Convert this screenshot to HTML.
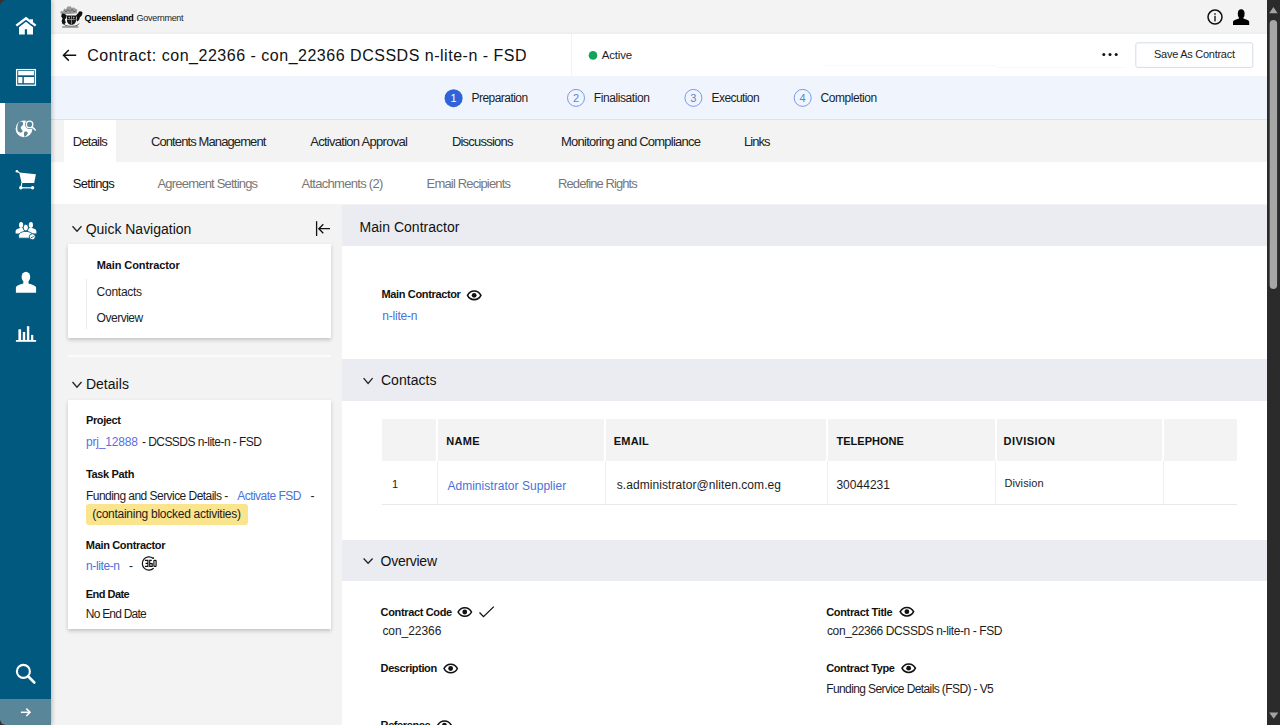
<!DOCTYPE html>
<html><head><meta charset="utf-8">
<style>
html,body{margin:0;padding:0;}
body{width:1280px;height:725px;overflow:hidden;position:relative;background:#f3f3f3;font-family:"Liberation Sans",sans-serif;}
.a{position:absolute;}
.t{position:absolute;white-space:nowrap;line-height:1;}
svg{position:absolute;overflow:visible;}
</style></head><body>
<!-- corners -->
<div class="a" style="left:0;top:0;width:10px;height:10px;background:#3b3330;"></div>
<div class="a" style="left:0;top:715px;width:10px;height:10px;background:#3b3330;"></div>

<!-- title bar -->
<div class="a" style="left:51px;top:34px;width:1216px;height:42px;background:#fff;box-shadow:0 -1px 2px rgba(0,0,0,.04);"></div>
<div class="a" style="left:571px;top:34px;width:1px;height:42px;background:#f3f3f3;"></div>
<div class="a" style="left:823px;top:65px;width:173px;height:1px;background:#f9f9f9;"></div><div class="a" style="left:996px;top:67px;width:130px;height:1px;background:#f9f9f9;"></div>
<!-- stepper -->
<div class="a" style="left:51px;top:76px;width:1216px;height:43px;background:#f0f5fd;border-bottom:1px solid #dfe2e8;"></div>
<!-- tabs -->
<div class="a" style="left:51px;top:120px;width:1216px;height:42.3px;background:#f3f3f3;"></div>
<div class="a" style="left:64px;top:120px;width:52.3px;height:42.3px;background:#fff;"></div>
<!-- subtabs -->
<div class="a" style="left:51px;top:162.3px;width:1216px;height:41.7px;background:#fff;"></div>

<!-- right content -->
<div class="a" style="left:342px;top:204px;width:925px;height:521px;background:#fff;"></div><div class="a" style="left:342px;top:204px;width:925px;height:1px;background:#f4f4f6;"></div>
<div class="a" style="left:342px;top:204.7px;width:925px;height:41.6px;background:#ebecf1;"></div>
<div class="a" style="left:342px;top:358.5px;width:925px;height:42px;background:#ebecf1;"></div>
<div class="a" style="left:342px;top:539.7px;width:925px;height:41px;background:#ebecf1;"></div>

<!-- table -->
<div class="a" style="left:381.5px;top:419px;width:855.5px;height:41.5px;background:#f3f3f3;"></div>
<div class="a" style="left:381.5px;top:504px;width:855.5px;height:1px;background:#e8e8e8;"></div>
<div class="a" style="left:436px;top:419px;width:2px;height:41.5px;background:#fff;"></div><div class="a" style="left:436.5px;top:460.5px;width:1px;height:43.5px;background:#eeeeee;"></div>
<div class="a" style="left:604px;top:419px;width:2px;height:41.5px;background:#fff;"></div><div class="a" style="left:604.5px;top:460.5px;width:1px;height:43.5px;background:#eeeeee;"></div>
<div class="a" style="left:826px;top:419px;width:2px;height:41.5px;background:#fff;"></div><div class="a" style="left:826.5px;top:460.5px;width:1px;height:43.5px;background:#eeeeee;"></div>
<div class="a" style="left:994.5px;top:419px;width:2px;height:41.5px;background:#fff;"></div><div class="a" style="left:995.0px;top:460.5px;width:1px;height:43.5px;background:#eeeeee;"></div>
<div class="a" style="left:1162px;top:419px;width:2px;height:41.5px;background:#fff;"></div><div class="a" style="left:1162.5px;top:460.5px;width:1px;height:43.5px;background:#eeeeee;"></div>

<!-- left cards -->
<div class="a" style="left:68px;top:244px;width:263.3px;height:94px;background:#fff;box-shadow:0 1.5px 4px rgba(0,0,0,.2);"></div>
<div class="a" style="left:86px;top:279px;width:1px;height:50px;background:#ececec;"></div>
<div class="a" style="left:68px;top:355px;width:263.3px;height:2px;background:#fbfbfb;"></div>
<div class="a" style="left:68px;top:399.7px;width:263.3px;height:229px;background:#fff;box-shadow:0 1.5px 4px rgba(0,0,0,.2);"></div>
<div class="a" style="left:85.6px;top:504.4px;width:162px;height:20.3px;background:#fbe48e;border-radius:3px;"></div>

<!-- sidebar -->
<div class="a" style="left:0;top:0;width:51px;height:725px;background:#02597f;border-radius:6px 0 0 6px;box-shadow:1px 0 4px rgba(0,0,0,.25);"></div>
<div class="a" style="left:0;top:103px;width:51px;height:51px;background:#5a8699;"></div>
<div class="a" style="left:0;top:103px;width:5px;height:51px;background:#fff;"></div>
<div class="a" style="left:0;top:699px;width:51px;height:26px;background:#5a8699;border-radius:0 0 0 6px;"></div>

<svg width="1280" height="725" style="left:0;top:0;">
 <!-- home -->
 <g fill="#fff">
  <path d="M16.3 25.6 L26 18.2 L35.6 25.6" fill="none" stroke="#fff" stroke-width="2.4" stroke-linejoin="miter"/>
  <rect x="30" y="19.3" width="3" height="4"/>
  <path d="M19 27.2 L26 21.8 L33 27.2 V34.4 H27.1 V29.2 H24.8 V34.4 H19 Z"/>
 </g>
 <!-- layout -->
 <g fill="#fff">
  <rect x="16.6" y="69.6" width="18.8" height="15.6" fill="none" stroke="#fff" stroke-width="1.3"/>
  <rect x="18.2" y="71" width="15.8" height="4.3"/>
  <rect x="18.2" y="77" width="4.2" height="6.2"/>
  <rect x="23.8" y="77" width="10.2" height="6.2"/>
 </g>
 <!-- globe -->
 <g>
  <circle cx="24" cy="128.8" r="8.4" fill="#fff"/>
  <path d="M19.5 121.8 C22 121 23.5 122 23 124.5 C22.5 126.5 20.5 126 20.8 128 C21 129.5 23 129.8 22.5 131.5 C22 133 19.5 133 18 131.5 C17 129 17 124 19.5 121.8Z" fill="#5a8699"/>
  <path d="M24.5 131.8 C26.5 131 28.5 132 27.5 134 C26.8 135.5 25 136.5 24.5 137.2 C24 135 23.5 133 24.5 131.8Z" fill="#5a8699"/>
  <circle cx="29.6" cy="124.4" r="4.6" fill="#5a8699"/>
  <circle cx="29.6" cy="124.4" r="3.2" fill="none" stroke="#fff" stroke-width="1.3"/>
  <line x1="32" y1="126.8" x2="35.3" y2="130" stroke="#fff" stroke-width="1.5" stroke-linecap="round"/>
 </g>
 <!-- cart -->
 <g fill="#fff" stroke="#fff">
  <circle cx="16.9" cy="171.2" r="1.3" stroke="none"/>
  <line x1="16.9" y1="171.2" x2="19.6" y2="172.8" stroke-width="1.2"/>
  <path d="M19.2 172.6 L35.9 174.3 L34.2 183.1 L21.6 183.1 Z" stroke="none"/>
  <line x1="21.8" y1="183" x2="21" y2="187.5" stroke-width="1.1"/>
  <circle cx="20.8" cy="187.8" r="1.7" stroke="none"/>
  <circle cx="32.6" cy="187.8" r="1.7" stroke="none"/>
  <line x1="20.8" y1="187.8" x2="32.6" y2="187.8" stroke-width="1.2"/>
 </g>
 <!-- people -->
 <g fill="#fff">
  <ellipse cx="21.1" cy="225" rx="2.1" ry="2.9"/>
  <path d="M15.6 233.4 V231 C15.6 229.3 18.5 228.4 20 228 H22.2 C23 228.3 23.6 228.7 24 229.2 V233.4 Z"/>
  <ellipse cx="30.9" cy="225" rx="2.1" ry="2.9"/>
  <path d="M36.4 233.4 V231 C36.4 229.3 33.5 228.4 32 228 H29.8 C29 228.3 28.4 228.7 28 229.2 V233.4 Z"/>
  <ellipse cx="25.8" cy="227.6" rx="2.6" ry="3.4" stroke="#02597f" stroke-width="0.9"/>
  <path d="M18.6 238.2 V235.2 C18.6 233 22 231.8 24.5 231.4 H27 C29.5 231.8 32.8 233 32.8 235.2 V238.2 Z" stroke="#02597f" stroke-width="0.9"/>
  <circle cx="32.3" cy="236.8" r="3" stroke="#02597f" stroke-width="0.9"/>
  <path d="M30.9 236.9 L31.9 237.8 L33.6 235.9" fill="none" stroke="#02597f" stroke-width="0.9"/>
 </g>
 <!-- person -->
 <g fill="#fff">
  <ellipse cx="25.9" cy="277" rx="4.3" ry="5.2"/>
  <path d="M15.9 292.7 V287.5 C15.9 285.8 20 284.6 23.2 283.5 L23.5 281 H28.3 L28.6 283.5 C31.8 284.6 36.1 285.8 36.1 287.5 V292.7 Z"/>
 </g>
 <!-- chart -->
 <g fill="#fff">
  <rect x="15.9" y="340" width="20.2" height="1.8"/>
  <rect x="18.4" y="329.3" width="2.7" height="11"/>
  <rect x="22.8" y="332" width="2.4" height="8.5"/>
  <rect x="26.9" y="326.2" width="2.4" height="14"/>
  <rect x="31" y="334.9" width="2.3" height="5.5"/>
 </g>
 <!-- search -->
 <circle cx="23.4" cy="671.4" r="6.5" fill="none" stroke="#fff" stroke-width="2.1"/>
 <line x1="28.3" y1="676.5" x2="34.3" y2="682.5" stroke="#fff" stroke-width="2.6" stroke-linecap="round"/>
 <!-- expand arrow -->
 <path d="M20.9 712.3 H30" fill="none" stroke="#fff" stroke-width="1.5"/>
 <path d="M26.3 708.6 L30 712.3 L26.3 716" fill="none" stroke="#fff" stroke-width="1.5"/>

 <!-- crest -->
 <g>
  <path d="M60.2 13 L61 10.8 L63 11.6 L64 8.5 L66 9.2 L67.5 6.6 L70.5 6.3 L72 8 L73.5 7.2 L75.5 8.8 L77.4 9.5 L76.8 13.2 L70 14 L62.5 14 Z" fill="#9a9a9a"/>
  <path d="M64.5 10.5 L66 12 L68 9.5 L70 11.5 L72 9.3 L74 12 L75.6 10.8" fill="none" stroke="#555" stroke-width="0.8"/>
  <path d="M61.8 13.5 L64.5 13.8 L66.8 15.5 L66.2 18 L64.8 19.5 L65.8 22.5 L64.2 24.5 L62.5 24 L61.6 21 L62.6 18.5 L61.2 16.5 Z" fill="#111"/>
  <path d="M76 15.5 L78.2 13 L79 11.6 L81 11.3 L82.6 12.6 L81.8 15.5 L80 17.2 L79.2 19.5 L77.6 21.5 L76.3 20.2 L76.8 18 Z" fill="#111"/>
  <path d="M67 15.5 H76 V20.5 C76 23.3 73.6 24.8 71.5 24.8 C69.4 24.8 67 23.3 67 20.5 Z" fill="#1a1a1a"/>
  <path d="M71.5 15.8 V24.2 M67.5 19.5 H75.5" stroke="#aaa" stroke-width="0.7"/>
  <circle cx="69.3" cy="17.6" r="0.8" fill="#bbb"/><circle cx="73.7" cy="17.6" r="0.8" fill="#bbb"/>
  <path d="M63.5 23.8 C65.5 26 68 26.3 71.5 26.3 C75 26.3 77.5 26 79 23.5" fill="none" stroke="#444" stroke-width="0.9"/>
  <rect x="62.2" y="26.2" width="16.2" height="1.5" fill="#8a8a8a"/>
 </g>
 <!-- back arrow -->
 <path d="M63.5 55.3 H76.2 M68.8 50 L63.5 55.3 L68.8 60.6" fill="none" stroke="#111" stroke-width="1.5"/>
 <!-- green dot -->
 <circle cx="593" cy="55.4" r="4.3" fill="#12a55a"/>
 <!-- dots -->
 <circle cx="1103.8" cy="54.4" r="1.5" fill="#111"/>
 <circle cx="1110" cy="54.4" r="1.5" fill="#111"/>
 <circle cx="1116.2" cy="54.4" r="1.5" fill="#111"/>
 <!-- save button -->
 <rect x="1135.8" y="42.8" width="117" height="24.6" rx="2" fill="#fff" stroke="#d3dbea" stroke-width="1"/>
 <!-- info -->
 <circle cx="1215" cy="17.1" r="7" fill="none" stroke="#111" stroke-width="1.5"/>
 <rect x="1214.2" y="13.2" width="1.6" height="1.5" fill="#222"/>
 <rect x="1214.2" y="15.8" width="1.6" height="5.6" fill="#333"/>
 <!-- user -->
 <g fill="#000">
  <ellipse cx="1241.2" cy="13.8" rx="3.4" ry="4.6"/>
  <path d="M1233 24.9 V21.8 C1233 20.5 1236 19.5 1239 18.6 L1239.2 17 H1243.2 L1243.4 18.6 C1246.4 19.5 1249.2 20.5 1249.2 21.8 V24.9 Z"/>
 </g>

 <!-- stepper circles -->
 <circle cx="453.6" cy="98.2" r="9" fill="#2f63d8"/>
 <circle cx="576" cy="97.9" r="8.5" fill="none" stroke="#7a9be6" stroke-width="1"/>
 <circle cx="693.4" cy="97.9" r="8.5" fill="none" stroke="#7a9be6" stroke-width="1"/>
 <circle cx="802.7" cy="97.9" r="8.5" fill="none" stroke="#7a9be6" stroke-width="1"/>

 <!-- chevrons -->
 <path d="M72.5 226.3 L77 231.3 L81.5 226.3" fill="none" stroke="#222" stroke-width="1.3"/>
 <path d="M72.5 382 L77 387.2 L81.5 382" fill="none" stroke="#222" stroke-width="1.3"/>
 <path d="M363.6 378.2 L368.1 383.5 L372.6 378.2" fill="none" stroke="#222" stroke-width="1.3"/>
 <path d="M363.6 558.5 L368.1 563.3 L372.6 558.5" fill="none" stroke="#222" stroke-width="1.3"/>
 <!-- collapse icon -->
 <path d="M316.6 221.2 V236" fill="none" stroke="#111" stroke-width="1.3"/>
 <path d="M318.8 228.7 H330 M323.3 224.2 L318.8 228.7 L323.3 233.2" fill="none" stroke="#111" stroke-width="1.3"/>
 <!-- eyes -->
 <g id="eye" fill="none" stroke="#111" stroke-width="1.3">
 </g>
 <path d="M467.50 295.30 C470.30 289.60 478.10 289.60 480.90 295.30 C478.10 301.00 470.30 301.00 467.50 295.30 Z" fill="none" stroke="#111" stroke-width="1.6"/><circle cx="474.15" cy="295.30" r="2.4" fill="#111"/>
<path d="M458.10 612.00 C460.90 606.30 468.70 606.30 471.50 612.00 C468.70 617.70 460.90 617.70 458.10 612.00 Z" fill="none" stroke="#111" stroke-width="1.6"/><circle cx="464.75" cy="612.00" r="2.4" fill="#111"/>
<path d="M444.00 668.50 C446.80 662.80 454.60 662.80 457.40 668.50 C454.60 674.20 446.80 674.20 444.00 668.50 Z" fill="none" stroke="#111" stroke-width="1.6"/><circle cx="450.65" cy="668.50" r="2.4" fill="#111"/>
<path d="M437.80 725.20 C440.60 719.50 448.40 719.50 451.20 725.20 C448.40 730.90 440.60 730.90 437.80 725.20 Z" fill="none" stroke="#111" stroke-width="1.6"/><circle cx="444.45" cy="725.20" r="2.4" fill="#111"/>
<path d="M900.20 611.70 C903.00 606.00 910.80 606.00 913.60 611.70 C910.80 617.40 903.00 617.40 900.20 611.70 Z" fill="none" stroke="#111" stroke-width="1.6"/><circle cx="906.85" cy="611.70" r="2.4" fill="#111"/>
<path d="M902.00 668.20 C904.80 662.50 912.60 662.50 915.40 668.20 C912.60 673.90 904.80 673.90 902.00 668.20 Z" fill="none" stroke="#111" stroke-width="1.6"/><circle cx="908.65" cy="668.20" r="2.4" fill="#111"/>
 <!-- check -->
 <path d="M479.5 612.5 L483.5 616.6 L493.8 606.6" fill="none" stroke="#111" stroke-width="1.3"/>
 <!-- 360 icon -->
 <g fill="none" stroke="#111">
  <path d="M153.1 558.4 A6.6 6.6 0 1 0 153.6 568.2" stroke-width="1.2"/>
  <circle cx="153.2" cy="558.1" r="0.9" fill="#111" stroke="none"/>
  <path d="M144.9 560.4 H147.9 V566.3 H144.9 M145.6 563.4 H147.9" stroke-width="1.15"/>
  <path d="M151.8 560.4 H149.7 V566.3 H152.2 V563.6 H149.7" stroke-width="1.15"/>
  <rect x="153.9" y="560.4" width="2.2" height="5.9" rx="0.6" stroke-width="1.15"/>
 </g>
 <!-- scrollbar -->
 <rect x="1267" y="0" width="13" height="725" fill="#2b2b2b"/>
 <path d="M1269.2 13.2 L1273.4 6.9 L1277.6 13.2 Z" fill="#a3a3a3"/>
 <rect x="1269.7" y="19.9" width="7.4" height="269" rx="3.7" fill="#a6a6a6"/>
 <path d="M1269.2 712.6 L1278.3 712.6 L1273.75 718.8 Z" fill="#a3a3a3"/>
</svg>
<span class="t" style="left:84.50px;top:13.68px;font-size:9px;font-weight:bold;color:#000;letter-spacing:-0.246px;">Queensland</span>
<span class="t" style="left:136.50px;top:14.18px;font-size:9px;font-weight:normal;color:#222;letter-spacing:-0.269px;">Government</span>
<span class="t" style="left:87.25px;top:47.96px;font-size:16px;font-weight:normal;color:#111;letter-spacing:0.513px;">Contract: con_22366 - con_22366 DCSSDS n-lite-n - FSD</span>
<span class="t" style="left:601.70px;top:49.77px;font-size:11.5px;font-weight:normal;color:#1d1d1d;letter-spacing:-0.163px;">Active</span>
<span class="t" style="left:1154.00px;top:49.39px;font-size:11px;font-weight:normal;color:#1d1d1d;letter-spacing:-0.266px;">Save As Contract</span>
<span class="t" style="left:471.50px;top:92.34px;font-size:12px;font-weight:normal;color:#1d1d1d;letter-spacing:-0.544px;">Preparation</span>
<span class="t" style="left:593.80px;top:92.04px;font-size:12px;font-weight:normal;color:#1d1d1d;letter-spacing:-0.409px;">Finalisation</span>
<span class="t" style="left:711.60px;top:92.04px;font-size:12px;font-weight:normal;color:#1d1d1d;letter-spacing:-0.587px;">Execution</span>
<span class="t" style="left:820.40px;top:92.04px;font-size:12px;font-weight:normal;color:#1d1d1d;letter-spacing:-0.422px;">Completion</span>
<span class="t" style="left:72.80px;top:135.10px;font-size:13px;font-weight:normal;color:#222;letter-spacing:-0.789px;">Details</span>
<span class="t" style="left:150.90px;top:135.10px;font-size:13px;font-weight:normal;color:#222;letter-spacing:-0.890px;">Contents Management</span>
<span class="t" style="left:310.20px;top:135.10px;font-size:13px;font-weight:normal;color:#222;letter-spacing:-0.716px;">Activation Approval</span>
<span class="t" style="left:451.90px;top:135.10px;font-size:13px;font-weight:normal;color:#222;letter-spacing:-0.785px;">Discussions</span>
<span class="t" style="left:561.00px;top:135.10px;font-size:13px;font-weight:normal;color:#222;letter-spacing:-0.761px;">Monitoring and Compliance</span>
<span class="t" style="left:744.00px;top:135.10px;font-size:13px;font-weight:normal;color:#222;letter-spacing:-0.937px;">Links</span>
<span class="t" style="left:72.80px;top:177.00px;font-size:13px;font-weight:normal;color:#111;letter-spacing:-0.725px;">Settings</span>
<span class="t" style="left:157.50px;top:177.00px;font-size:13px;font-weight:normal;color:#777;letter-spacing:-0.799px;">Agreement Settings</span>
<span class="t" style="left:301.50px;top:177.00px;font-size:13px;font-weight:normal;color:#777;letter-spacing:-0.711px;">Attachments (2)</span>
<span class="t" style="left:426.60px;top:177.00px;font-size:13px;font-weight:normal;color:#777;letter-spacing:-0.828px;">Email Recipients</span>
<span class="t" style="left:558.00px;top:177.00px;font-size:13px;font-weight:normal;color:#777;letter-spacing:-0.907px;">Redefine Rights</span>
<span class="t" style="left:85.70px;top:221.85px;font-size:14px;font-weight:normal;color:#111;letter-spacing:-0.015px;">Quick Navigation</span>
<span class="t" style="left:96.70px;top:260.19px;font-size:11px;font-weight:bold;color:#111;letter-spacing:-0.095px;">Main Contractor</span>
<span class="t" style="left:96.60px;top:285.84px;font-size:12px;font-weight:normal;color:#222;letter-spacing:-0.265px;">Contacts</span>
<span class="t" style="left:96.60px;top:311.74px;font-size:12px;font-weight:normal;color:#222;letter-spacing:-0.487px;">Overview</span>
<span class="t" style="left:85.90px;top:377.35px;font-size:14px;font-weight:normal;color:#111;letter-spacing:0.035px;">Details</span>
<span class="t" style="left:86.00px;top:414.99px;font-size:11px;font-weight:bold;color:#111;letter-spacing:-0.399px;">Project</span>
<span class="t" style="left:86.00px;top:435.64px;font-size:12px;font-weight:normal;color:#5a6ee6;letter-spacing:-0.197px;">prj_12888</span>
<span class="t" style="left:141.90px;top:435.64px;font-size:12px;font-weight:normal;color:#1d1d1d;letter-spacing:-0.542px;">- DCSSDS n-lite-n - FSD</span>
<span class="t" style="left:86.00px;top:469.19px;font-size:11px;font-weight:bold;color:#111;letter-spacing:-0.344px;">Task Path</span>
<span class="t" style="left:86.00px;top:489.74px;font-size:12px;font-weight:normal;color:#1d1d1d;letter-spacing:-0.543px;">Funding and Service Details -</span>
<span class="t" style="left:237.20px;top:489.74px;font-size:12px;font-weight:normal;color:#4a72d8;letter-spacing:-0.529px;">Activate FSD</span>
<span class="t" style="left:310.40px;top:489.74px;font-size:12px;font-weight:normal;color:#1d1d1d;">-</span>
<span class="t" style="left:92.20px;top:508.44px;font-size:12px;font-weight:normal;color:#1d1d1d;letter-spacing:-0.265px;">(containing blocked activities)</span>
<span class="t" style="left:85.80px;top:539.59px;font-size:11px;font-weight:bold;color:#111;letter-spacing:-0.331px;">Main Contractor</span>
<span class="t" style="left:86.00px;top:559.94px;font-size:12px;font-weight:normal;color:#4a72d8;letter-spacing:-0.383px;">n-lite-n</span>
<span class="t" style="left:129.00px;top:559.94px;font-size:12px;font-weight:normal;color:#1d1d1d;">-</span>
<span class="t" style="left:85.80px;top:588.99px;font-size:11px;font-weight:bold;color:#111;letter-spacing:-0.539px;">End Date</span>
<span class="t" style="left:85.80px;top:607.94px;font-size:12px;font-weight:normal;color:#1d1d1d;letter-spacing:-0.781px;">No End Date</span>
<span class="t" style="left:359.50px;top:219.65px;font-size:14px;font-weight:normal;color:#111;letter-spacing:0.029px;">Main Contractor</span>
<span class="t" style="left:381.40px;top:288.89px;font-size:11px;font-weight:bold;color:#111;letter-spacing:-0.345px;">Main Contractor</span>
<span class="t" style="left:382.20px;top:309.54px;font-size:12px;font-weight:normal;color:#4a72d8;letter-spacing:-0.197px;">n-lite-n</span>
<span class="t" style="left:380.90px;top:373.45px;font-size:14px;font-weight:normal;color:#111;letter-spacing:0.050px;">Contacts</span>
<span class="t" style="left:446.20px;top:435.69px;font-size:11px;font-weight:bold;color:#111;letter-spacing:0.337px;">NAME</span>
<span class="t" style="left:613.80px;top:435.69px;font-size:11px;font-weight:bold;color:#111;letter-spacing:0.170px;">EMAIL</span>
<span class="t" style="left:836.40px;top:435.69px;font-size:11px;font-weight:bold;color:#111;letter-spacing:0.034px;">TELEPHONE</span>
<span class="t" style="left:1003.60px;top:435.69px;font-size:11px;font-weight:bold;color:#111;letter-spacing:0.445px;">DIVISION</span>
<span class="t" style="left:391.90px;top:479.19px;font-size:11px;font-weight:normal;color:#1d1d1d;">1</span>
<span class="t" style="left:447.40px;top:480.34px;font-size:12px;font-weight:normal;color:#4a72d8;letter-spacing:0.036px;">Administrator Supplier</span>
<span class="t" style="left:616.80px;top:478.84px;font-size:12px;font-weight:normal;color:#1d1d1d;letter-spacing:0.070px;">s.administrator@nliten.com.eg</span>
<span class="t" style="left:836.40px;top:479.24px;font-size:12px;font-weight:normal;color:#1d1d1d;letter-spacing:0.030px;">30044231</span>
<span class="t" style="left:1004.40px;top:478.19px;font-size:11px;font-weight:normal;color:#1d1d1d;letter-spacing:0.113px;">Division</span>
<span class="t" style="left:380.60px;top:554.15px;font-size:14px;font-weight:normal;color:#111;letter-spacing:-0.278px;">Overview</span>
<span class="t" style="left:380.60px;top:606.99px;font-size:11px;font-weight:bold;color:#111;letter-spacing:-0.348px;">Contract Code</span>
<span class="t" style="left:382.40px;top:625.34px;font-size:12px;font-weight:normal;color:#1d1d1d;letter-spacing:-0.049px;">con_22366</span>
<span class="t" style="left:380.60px;top:663.49px;font-size:11px;font-weight:bold;color:#111;letter-spacing:-0.401px;">Description</span>
<span class="t" style="left:380.60px;top:719.69px;font-size:11px;font-weight:bold;color:#111;letter-spacing:-0.399px;">Reference</span>
<span class="t" style="left:826.20px;top:607.09px;font-size:11px;font-weight:bold;color:#111;letter-spacing:-0.330px;">Contract Title</span>
<span class="t" style="left:827.00px;top:625.44px;font-size:12px;font-weight:normal;color:#1d1d1d;letter-spacing:-0.397px;">con_22366 DCSSDS n-lite-n - FSD</span>
<span class="t" style="left:826.20px;top:663.29px;font-size:11px;font-weight:bold;color:#111;letter-spacing:-0.370px;">Contract Type</span>
<span class="t" style="left:826.20px;top:682.84px;font-size:12px;font-weight:normal;color:#1d1d1d;letter-spacing:-0.600px;">Funding Service Details (FSD) - V5</span>
<span class="t" style="left:450.5px;top:93px;font-size:11px;color:#fff;">1</span>
<span class="t" style="left:572.9px;top:92.8px;font-size:11px;color:#5b7fdc;">2</span>
<span class="t" style="left:690.3px;top:92.8px;font-size:11px;color:#5b7fdc;">3</span>
<span class="t" style="left:799.6px;top:92.8px;font-size:11px;color:#5b7fdc;">4</span>
</body></html>
